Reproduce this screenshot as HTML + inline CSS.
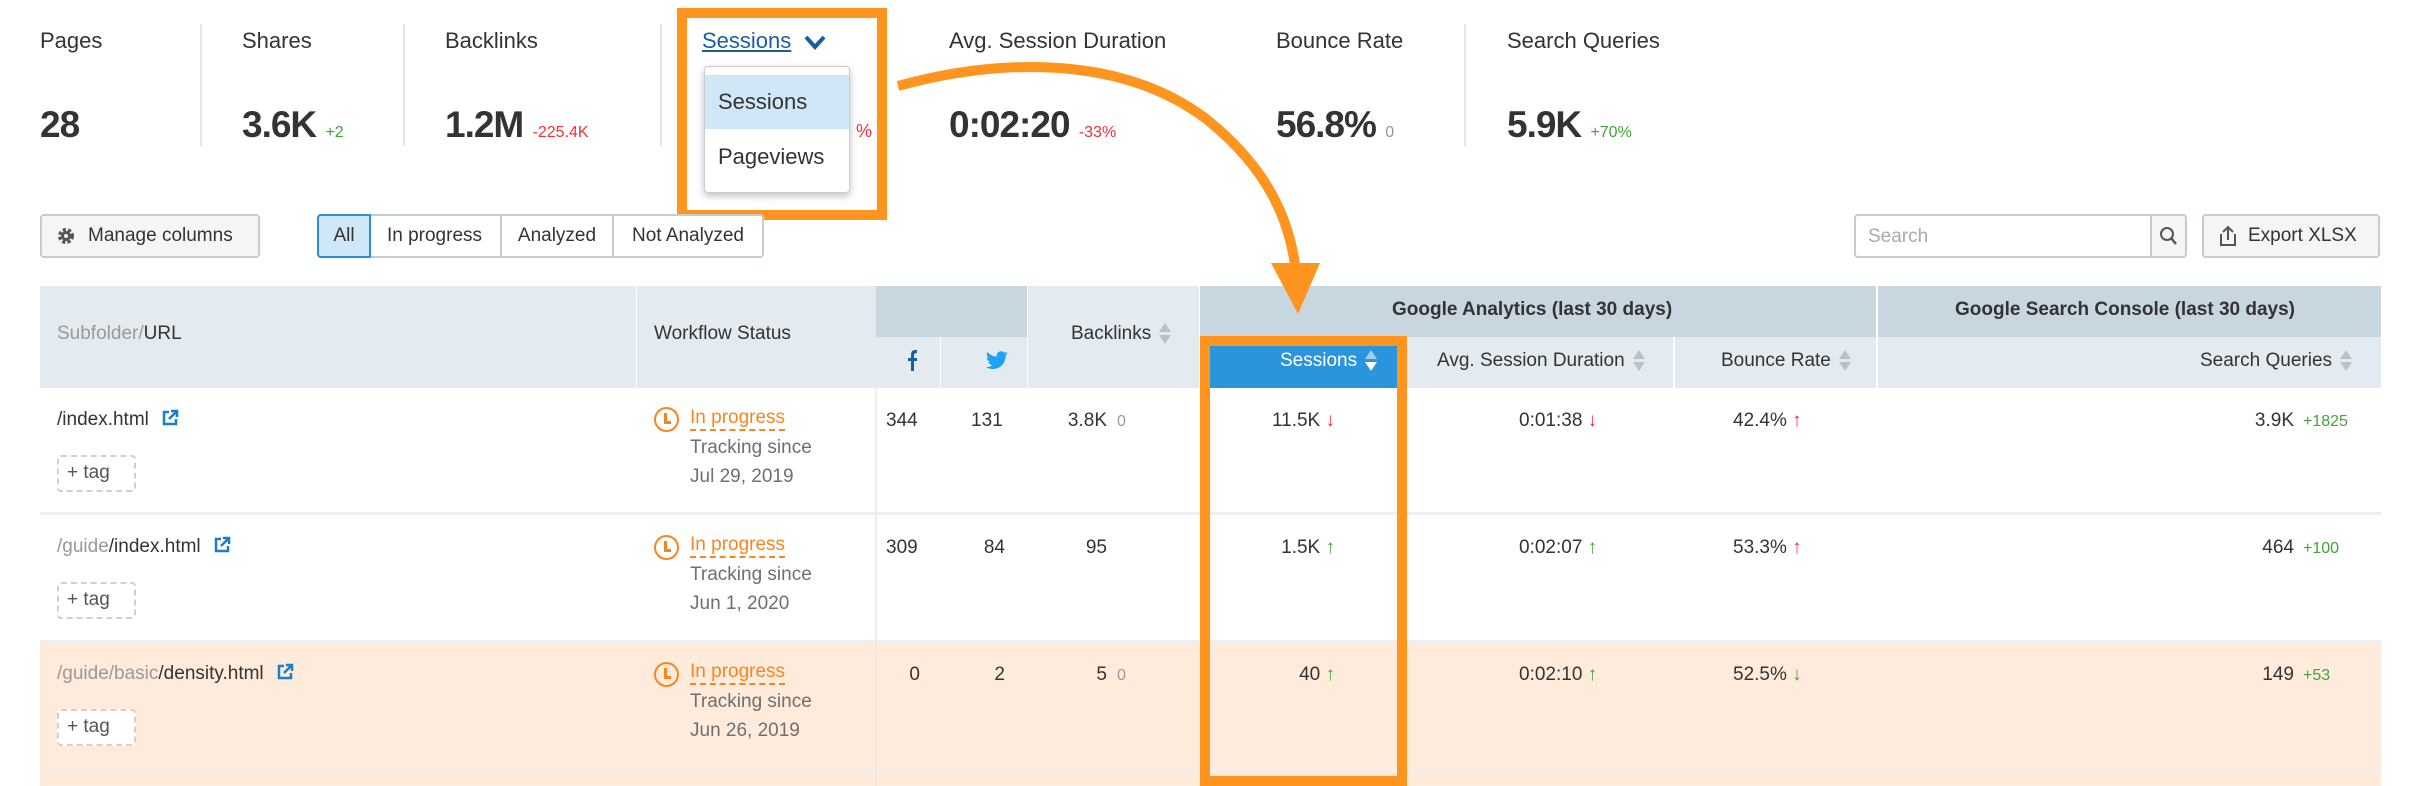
<!DOCTYPE html>
<html><head><meta charset="utf-8"><style>
*{margin:0;padding:0;box-sizing:border-box}
body{width:2412px;height:786px;overflow:hidden;background:#fff;font-family:"Liberation Sans",sans-serif;color:#333;position:relative}
.a{position:absolute;white-space:nowrap}
.lbl{font-size:22px;color:#333;top:28px}
.val{font-size:37px;font-weight:bold;color:#333;top:104px;letter-spacing:-1px}
.d{font-size:16px;font-weight:normal;letter-spacing:0}
.vd{position:absolute;top:24px;width:2px;height:122px;background:#e5e5e5}
.btn{position:absolute;top:214px;height:44px;border:2px solid #c5ccd0;border-radius:4px;background:#f4f5f6;font-size:19px;color:#333;display:flex;align-items:center}
.seg{position:absolute;top:214px;height:44px;border:2px solid #c5ccd0;font-size:19px;display:flex;align-items:center;justify-content:center;background:#fff}
.hl{background:#e3ebf1}.hd{background:#c7d6df}
.cell{position:absolute}
.t{font-size:19px;color:#333;position:absolute;white-space:nowrap}
.g{color:#43a33b}.r{color:#f0303a}.gr{color:#999}
.sort{display:inline-block;width:12px;height:24px;vertical-align:middle;margin-left:8px;position:relative}
.sort:before{content:"";position:absolute;left:0;top:1px;border:6px solid transparent;border-bottom:9px solid #b7c3cb;border-top:0}
.sort:after{content:"";position:absolute;left:0;top:13px;border:6px solid transparent;border-top:9px solid #b7c3cb;border-bottom:0}
.sw:before{border-bottom-color:#9fd0f2}.sw:after{border-top-color:#fff}
.sep{position:absolute;left:40px;width:2341px;height:3px;background:#efefef}
.ip{color:#f7861f;border-bottom:2px dashed #f7861f;padding-bottom:1px}
.gt{color:#6f6f6f}
.clock{position:absolute;width:25px;height:25px;border:2.5px solid #f7861f;border-radius:50%}
.clock:before{content:"";position:absolute;left:8px;top:4px;width:3px;height:10px;background:#f7861f}
.clock:after{content:"";position:absolute;left:8px;top:12px;width:7px;height:3px;background:#f7861f}
.tag{position:absolute;left:57px;width:79px;height:37px;border:2px dashed #d0d0d0;border-radius:4px;font-size:19px;color:#555;padding-left:8px;line-height:32px;background:#fff}
.ext{display:inline-block;margin-left:12px;vertical-align:-2px}
.sm{font-size:16px}
</style></head><body>

<div class="a lbl" style="left:40px">Pages</div>
<div class="a val" style="left:40px">28</div>
<div class="vd" style="left:200px"></div>
<div class="a lbl" style="left:242px">Shares</div>
<div class="a val" style="left:242px">3.6K <span class="d g">+2</span></div>
<div class="vd" style="left:403px"></div>
<div class="a lbl" style="left:445px">Backlinks</div>
<div class="a val" style="left:445px">1.2M <span class="d r">-225.4K</span></div>
<div class="vd" style="left:660px"></div>
<div class="a lbl" style="left:702px;color:#1a5ea0;text-decoration:underline">Sessions</div>
<svg class="a" style="left:803px;top:34px" width="24" height="18"><path d="M3 3 L12 13 L21 3" stroke="#1a5ea0" stroke-width="4" fill="none"/></svg>
<div class="a val" style="left:856px"><span class="d r" style="font-size:18px">%</span></div>
<div class="a lbl" style="left:949px">Avg. Session Duration</div>
<div class="a val" style="left:949px">0:02:20 <span class="d r">-33%</span></div>
<div class="a lbl" style="left:1276px">Bounce Rate</div>
<div class="a val" style="left:1276px">56.8% <span class="d gr">0</span></div>
<div class="vd" style="left:1464px"></div>
<div class="a lbl" style="left:1507px">Search Queries</div>
<div class="a val" style="left:1507px">5.9K <span class="d g">+70%</span></div>

<div class="a" style="left:704px;top:66px;width:146px;height:127px;background:#fff;border:1px solid #ccc;border-radius:4px;box-shadow:0 3px 8px rgba(0,0,0,.25)"></div>
<div class="a" style="left:705px;top:75px;width:144px;height:54px;background:#d0e7f7"></div>
<div class="a" style="left:718px;top:89px;font-size:22px">Sessions</div>
<div class="a" style="left:718px;top:144px;font-size:22px">Pageviews</div>
<div class="a" style="left:677px;top:8px;width:210px;height:212px;border:10px solid #ff941e"></div>

<div class="btn" style="left:40px;width:220px;padding-left:14px"><svg width="20" height="20" viewBox="0 0 20 20"><circle cx="10" cy="10" r="6" fill="none" stroke="#555" stroke-width="4" stroke-dasharray="3 2"/><circle cx="10" cy="10" r="5" fill="#555"/><circle cx="10" cy="10" r="2" fill="#f4f5f6"/></svg><span style="margin-left:12px">Manage columns</span></div>
<div class="seg" style="left:317px;width:54px;background:#d0e7f7;border-color:#2b8fdb;border-radius:4px 0 0 4px;z-index:2">All</div>
<div class="seg" style="left:369px;width:133px;border-left:0">In progress</div>
<div class="seg" style="left:500px;width:114px">Analyzed</div>
<div class="seg" style="left:612px;width:152px;border-radius:0 4px 4px 0">Not Analyzed</div>

<div class="a" style="left:1854px;top:214px;width:298px;height:44px;border:2px solid #c5ccd0;border-radius:4px 0 0 4px;font-size:19px;color:#aaa;padding:10px 12px">Search</div>
<div class="a" style="left:2150px;top:214px;width:37px;height:44px;border:2px solid #c5ccd0;border-radius:0 4px 4px 0;background:#f4f5f6"><svg width="33" height="40"><circle cx="15" cy="18" r="6" stroke="#555" stroke-width="2" fill="none"/><path d="M19 22 L24 28" stroke="#555" stroke-width="2.5"/></svg></div>
<div class="btn" style="left:2202px;width:178px;padding-left:14px"><svg width="20" height="24"><path d="M3 10 V21 H17 V10" stroke="#555" stroke-width="2" fill="none"/><path d="M10 16 V3 M5 8 L10 3 L15 8" stroke="#555" stroke-width="2" fill="none"/></svg><span style="margin-left:10px">Export XLSX</span></div>

<div class="cell hl" style="left:40px;top:286px;width:596px;height:102px"></div>
<div class="cell hl" style="left:637px;top:286px;width:239px;height:102px"></div>
<div class="cell hd" style="left:876px;top:286px;width:151px;height:51px"></div>
<div class="cell hl" style="left:876px;top:337px;width:64px;height:51px"></div>
<div class="cell hl" style="left:941px;top:337px;width:86px;height:51px"></div>
<div class="cell hl" style="left:1028px;top:286px;width:171px;height:102px"></div>
<div class="cell hd" style="left:1200px;top:286px;width:676px;height:51px"></div>
<div class="cell hd" style="left:1878px;top:286px;width:503px;height:51px"></div>
<div class="cell hl" style="left:1200px;top:337px;width:1181px;height:51px"></div>
<div class="cell" style="left:1673px;top:337px;width:2px;height:51px;background:#fff"></div>
<div class="cell" style="left:1876px;top:286px;width:2px;height:102px;background:#fff"></div>
<div class="cell" style="left:1209px;top:346px;width:188px;height:42px;background:#2a95dd"></div>

<div class="t" style="left:57px;top:323px;color:#999">Subfolder/<span style="color:#333">URL</span></div>
<div class="t" style="left:654px;top:323px">Workflow Status</div>
<svg class="a" style="left:905px;top:349px" width="14" height="22"><path d="M9 22 V12 H12 V9 H9 V6 Q9 4 12 4 V1 Q6 0 6 6 V9 H3 V12 H6 V22Z" fill="#1a5ea0"/></svg>
<svg class="a" style="left:985px;top:351px" width="24" height="20" viewBox="0 0 24 20"><path d="M23 2.5c-.8.4-1.7.6-2.6.7.9-.6 1.6-1.4 2-2.5-.9.5-1.9.9-2.9 1.1C18.6.8 17.4.2 16.1.2c-2.5 0-4.5 2-4.5 4.5 0 .4 0 .7.1 1C7.9 5.5 4.6 3.700 2.4 1 2 1.7 1.8 2.4 1.8 3.3c0 1.6.8 2.9 2 3.7-.7 0-1.4-.2-2-.6v.1c0 2.2 1.6 4 3.6 4.4-.4.1-.8.2-1.2.2-.3 0-.6 0-.8-.1.6 1.8 2.2 3.1 4.2 3.1-1.5 1.2-3.5 1.9-5.6 1.9H.9c2 1.3 4.4 2 6.9 2 8.3 0 12.8-6.9 12.8-12.8v-.6c.9-.6 1.7-1.4 2.4-2.2z" fill="#1da1f2"/></svg>
<div class="t" style="left:1071px;top:322px">Backlinks<span class="sort"></span></div>
<div class="t" style="left:1392px;top:299px;font-weight:bold">Google Analytics (last 30 days)</div>
<div class="t" style="left:1955px;top:299px;font-weight:bold">Google Search Console (last 30 days)</div>
<div class="t" style="left:1280px;top:349px;color:#fff">Sessions<span class="sort sw"></span></div>
<div class="t" style="left:1437px;top:349px">Avg. Session Duration<span class="sort"></span></div>
<div class="t" style="left:1721px;top:349px">Bounce Rate<span class="sort"></span></div>
<div class="t" style="left:2200px;top:349px">Search Queries<span class="sort"></span></div>

<div class="cell" style="left:40px;top:641px;width:2341px;height:145px;background:#feebdc"></div>
<div class="sep" style="top:512px"></div>
<div class="sep" style="top:640px"></div>
<div class="sep" style="top:767px"></div>
<div class="cell" style="left:875px;top:388px;width:3px;height:398px;background:linear-gradient(90deg,#e6e6e6,rgba(0,0,0,0))"></div>

<!-- row1 -->
<div class="t" style="left:57px;top:409px">/index.html<svg class="ext" width="18" height="18"><path d="M8 3 H3 V15 H15 V10" stroke="#1a7ed0" stroke-width="2.5" fill="none"/><path d="M8 10 L16 2 M10 2 H16 V8" stroke="#1a7ed0" stroke-width="2.5" fill="none"/></svg></div>
<div class="tag" style="top:455px">+ tag</div>
<div class="clock" style="left:654px;top:407px"></div>
<div class="t" style="left:690px;top:407px"><span class="ip">In progress</span></div>
<div class="t gt" style="left:690px;top:437px">Tracking since</div>
<div class="t gt" style="left:690px;top:466px">Jul 29, 2019</div>
<div class="t" style="left:886px;top:410px">344</div>
<div class="t" style="left:971px;top:410px">131</div>
<div class="t" style="right:1305px;top:410px">3.8K</div><div class="t sm" style="left:1117px;top:413px"><span class="gr">0</span></div>
<div class="t" style="right:1077px;top:410px">11.5K <span class="r">↓</span></div>
<div class="t" style="left:1519px;top:410px">0:01:38 <span class="r">↓</span></div>
<div class="t" style="left:1733px;top:410px">42.4% <span class="r">↑</span></div>
<div class="t" style="right:118px;top:410px">3.9K</div><div class="t sm" style="left:2303px;top:413px"><span class="g">+1825</span></div>

<!-- row2 -->
<div class="t" style="left:57px;top:536px"><span style="color:#999">/guide</span>/index.html<svg class="ext" width="18" height="18"><path d="M8 3 H3 V15 H15 V10" stroke="#1a7ed0" stroke-width="2.5" fill="none"/><path d="M8 10 L16 2 M10 2 H16 V8" stroke="#1a7ed0" stroke-width="2.5" fill="none"/></svg></div>
<div class="tag" style="top:582px">+ tag</div>
<div class="clock" style="left:654px;top:535px"></div>
<div class="t" style="left:690px;top:534px"><span class="ip">In progress</span></div>
<div class="t gt" style="left:690px;top:564px">Tracking since</div>
<div class="t gt" style="left:690px;top:593px">Jun 1, 2020</div>
<div class="t" style="left:886px;top:537px">309</div>
<div class="t" style="right:1407px;top:537px">84</div>
<div class="t" style="right:1305px;top:537px">95</div>
<div class="t" style="right:1077px;top:537px">1.5K <span class="g">↑</span></div>
<div class="t" style="left:1519px;top:537px">0:02:07 <span class="g">↑</span></div>
<div class="t" style="left:1733px;top:537px">53.3% <span class="r">↑</span></div>
<div class="t" style="right:118px;top:537px">464</div><div class="t sm" style="left:2303px;top:540px"><span class="g">+100</span></div>

<!-- row3 -->
<div class="t" style="left:57px;top:663px"><span style="color:#999">/guide/basic</span>/density.html<svg class="ext" width="18" height="18"><path d="M8 3 H3 V15 H15 V10" stroke="#1a7ed0" stroke-width="2.5" fill="none"/><path d="M8 10 L16 2 M10 2 H16 V8" stroke="#1a7ed0" stroke-width="2.5" fill="none"/></svg></div>
<div class="tag" style="top:709px">+ tag</div>
<div class="clock" style="left:654px;top:662px"></div>
<div class="t" style="left:690px;top:661px"><span class="ip">In progress</span></div>
<div class="t gt" style="left:690px;top:691px">Tracking since</div>
<div class="t gt" style="left:690px;top:720px">Jun 26, 2019</div>
<div class="t" style="right:1492px;top:664px">0</div>
<div class="t" style="right:1407px;top:664px">2</div>
<div class="t" style="right:1305px;top:664px">5</div><div class="t sm" style="left:1117px;top:667px"><span class="gr">0</span></div>
<div class="t" style="right:1077px;top:664px">40 <span class="g">↑</span></div>
<div class="t" style="left:1519px;top:664px">0:02:10 <span class="g">↑</span></div>
<div class="t" style="left:1733px;top:664px">52.5% <span class="g">↓</span></div>
<div class="t" style="right:118px;top:664px">149</div><div class="t sm" style="left:2303px;top:667px"><span class="g">+53</span></div>

<div class="a" style="left:1200px;top:336px;width:207px;height:450px;border:10px solid #ff941e"></div>

<svg class="a" style="left:0;top:0" width="2412" height="786">
<path d="M898 86 C1000 58 1120 55 1205 118 C1268 168 1290 220 1296 272" stroke="#ff941e" stroke-width="10" fill="none"/>
<path d="M1271 263 L1320 263 L1298 314 Z" fill="#ff941e"/>
</svg>
</body></html>
